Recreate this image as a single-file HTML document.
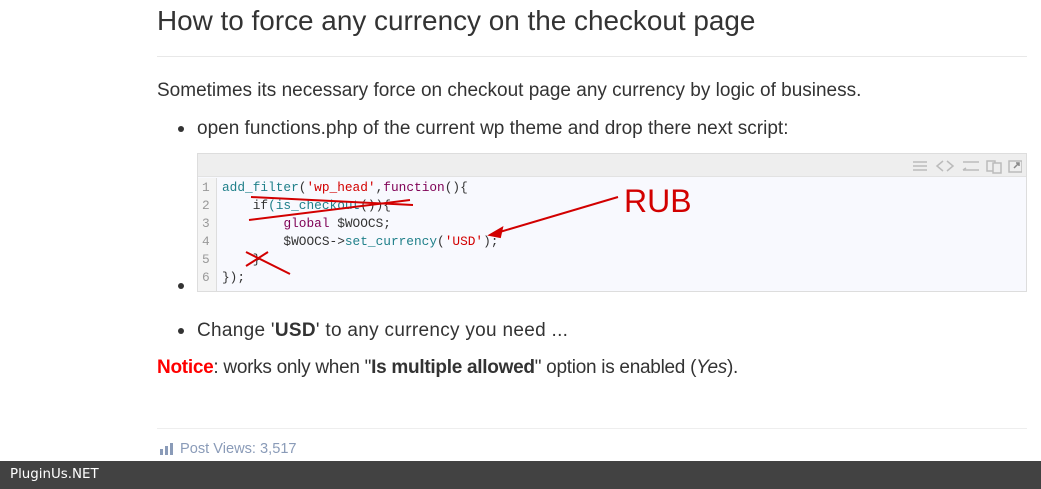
<!DOCTYPE html>
<html><head><meta charset="utf-8"><style>
*{margin:0;padding:0;box-sizing:border-box}
body{width:1041px;height:489px;overflow:hidden;background:#fff;font-family:"Liberation Sans",sans-serif;color:#333;position:relative}
.a{position:absolute;white-space:nowrap}
h1{position:absolute;left:157px;top:5px;font-size:27.9px;font-weight:normal;color:#333}
.hr{position:absolute;left:157px;width:870px;height:1px;background:#e8e8e8}
.t{font-size:19px}
.dot{position:absolute;width:6px;height:6px;border-radius:3px;background:#333}
.code{position:absolute;left:197px;top:153px;width:830px;height:139px;border:1px solid #ddd;background:#f8f9fe}
.tb{height:23px;background:#eee;border-bottom:1px solid #e2e2e2}
.gut{position:absolute;left:0;top:24px;width:19px;bottom:0;border-right:1px solid #ddd;background:#f4f4f4}
.code pre{position:absolute;top:25px;font-family:"Liberation Mono",monospace;font-size:12.8px;line-height:18px}
.k{color:#7f0055}.s{color:#d20000}.f{color:#20808a}
</style></head><body>
<h1>How to force any currency on the checkout page</h1>
<div class="hr" style="top:56px"></div>
<div class="a t" style="left:157px;top:80px">Sometimes its necessary force on checkout page any currency by logic of business.</div>
<div class="dot" style="left:178px;top:126px"></div>
<div class="a t" style="left:197px;top:118px">open functions.php of the current wp theme and drop there next script:</div>
<div class="code">
<div class="tb"><svg style="position:absolute;right:4px;top:4px" width="115" height="16" fill="none" stroke="#bbb" stroke-width="1.5">
<path d="M6 4h14M6 8h14M6 12h14"/><path d="M36 3l-6 5 6 5M40 3l6 5-6 5"/><path d="M56 4h16M56 12h16M56 12l3-2"/>
<rect x="80" y="3" width="8" height="10"/><rect x="86" y="5" width="8" height="10" fill="#eee"/>
<rect x="102" y="3" width="13" height="11"/><path d="M107 10l5-5M109 5h3v3" stroke="#888"/></svg></div>
<div class="gut"></div>
<pre style="left:4px;color:#999">1
2
3
4
5
6</pre>
<pre style="left:24px;color:#333"><span class="f">add_filter</span>(<span class="s">'wp_head'</span>,<span class="k">function</span>(){
    if<span class="f">(is_checkout</span>()){
        <span class="k">global</span> $WOOCS;
        $WOOCS-&gt;<span class="f">set_currency</span>(<span class="s">'USD'</span>);
    }
});</pre>
<div class="a" style="left:426px;top:29px;font-size:32px;color:#d20000">RUB</div>
<svg class="a" style="left:0;top:0" width="830" height="139" fill="none" stroke="#d20000" stroke-width="2">
<path d="M53 43L215 51M51 66L212 46M48 98L92 120M48 112L70 98M420 43L295 80"/><path d="M292 81l12-7-2 9z" fill="#d20000"/></svg>
</div>
<div class="dot" style="left:178px;top:328px"></div>
<div class="dot" style="left:178px;top:283px"></div>
<div class="a t" style="left:197px;top:320px;letter-spacing:0.3px">Change '<b>USD</b>' to any currency you need ...</div>
<div class="a t" style="left:157px;top:357px;letter-spacing:-0.28px"><b style="color:#f00">Notice</b>: works only when "<b>Is multiple allowed</b>" option is enabled (<i>Yes</i>).</div>
<div class="hr" style="top:428px;background:#eee"></div>
<svg class="a" style="left:160px;top:443px" width="14" height="12" fill="#8a9bb8"><rect x="0" y="6" width="3" height="6"/><rect x="5" y="3" width="3" height="9"/><rect x="10" y="0" width="3" height="12"/></svg>
<div class="a" style="left:180px;top:441px;font-size:14.6px;color:#8a9bb8">Post Views: 3,517</div>
<div class="a" style="left:0;top:461px;width:1041px;height:28px;background:#424242;color:#fff;font-size:13.4px;padding:6px 0 0 10px;font-family:'DejaVu Sans',sans-serif">PluginUs.NET</div>
</body></html>
